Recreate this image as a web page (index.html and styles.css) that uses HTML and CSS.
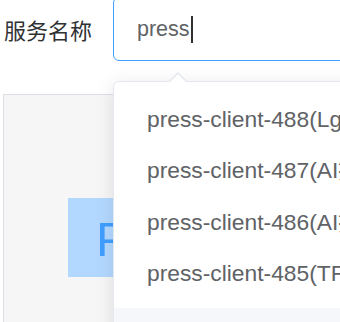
FILE: index.html
```html
<!DOCTYPE html>
<html lang="zh-CN">
<head>
    <meta charset="UTF-8">
    <meta name="viewport" content="width=device-width, initial-scale=1.0">
    <title>服务名称</title>
    <link rel="stylesheet" href="styles.css">
</head>
<body>
    <div class="form-row">
        <label class="form-label">服务名称</label>
        <div class="select-input">
            <span class="input-text">press</span><span class="caret"></span>
        </div>
    </div>

    <div class="panel">
        <div class="tag-box">P</div>
    </div>

    <div class="dropdown">
        <span class="arrow"></span>
        <ul class="options">
            <li>press-client-488(Lg服务)</li>
            <li>press-client-487(AI接口)</li>
            <li>press-client-486(AI接口)</li>
            <li>press-client-485(TF服务)</li>
            <li class="hover"></li>
        </ul>
    </div>
</body>
</html>
```

FILE: styles.css
```css
* {
    box-sizing: border-box;
}

body {
    margin: 0;
    font-family: "Liberation Sans", "Noto Sans CJK SC", sans-serif;
    background-color: #fff;
    overflow: hidden;
    width: 340px;
    height: 322px;
    position: relative;
}

.form-row {
    display: flex;
    align-items: center;
    margin-top: -3px;
    padding-left: 4px;
    height: 64px;
}

.form-label {
    flex: none;
    width: 109px;
    font-size: 22px;
    color: #303133;
    white-space: nowrap;
}

.select-input {
    flex: none;
    width: 300px;
    height: 64px;
    border: 1px solid #409eff;
    border-radius: 6px;
    padding-left: 23px;
    display: flex;
    align-items: center;
    font-size: 21.5px;
    color: #606266;
}

.caret {
    display: inline-block;
    width: 2px;
    height: 27px;
    margin-left: 1px;
    background-color: #303133;
}

.panel {
    margin: 33px 0 0 3px;
    width: 400px;
    height: 260px;
    border: 1px solid #dcdfe6;
    background-color: #f6f6f6;
    padding: 103px 0 0 64px;
}

.tag-box {
    width: 200px;
    height: 79px;
    padding: 4px 0 0 28px;
    line-height: 75px;
    font-size: 49px;
    color: #409eff;
    background-color: #b3d8ff;
}

.dropdown {
    position: absolute;
    left: 113px;
    top: 81px;
    width: 320px;
    height: 300px;
    background-color: #fff;
    border: 1px solid #e4e7ed;
    border-radius: 6px;
    box-shadow: 0 3px 19px rgba(0, 0, 0, 0.1);
}

.arrow {
    position: absolute;
    top: -19px;
    left: 55px;
    width: 0;
    height: 0;
    border: 9px solid transparent;
    border-bottom-color: #e4e7ed;
}

.arrow::after {
    content: "";
    position: absolute;
    left: -8px;
    top: -6px;
    border: 8px solid transparent;
    border-bottom-color: #fff;
}

.options {
    list-style: none;
    margin: 0;
    padding: 19.6px 0 0;
}

.options li {
    height: 51.6px;
    line-height: 34px;
    padding-left: 33px;
    font-size: 22.8px;
    color: #606266;
    white-space: nowrap;
}

.options li.hover {
    background-color: #f5f7fa;
}
```
